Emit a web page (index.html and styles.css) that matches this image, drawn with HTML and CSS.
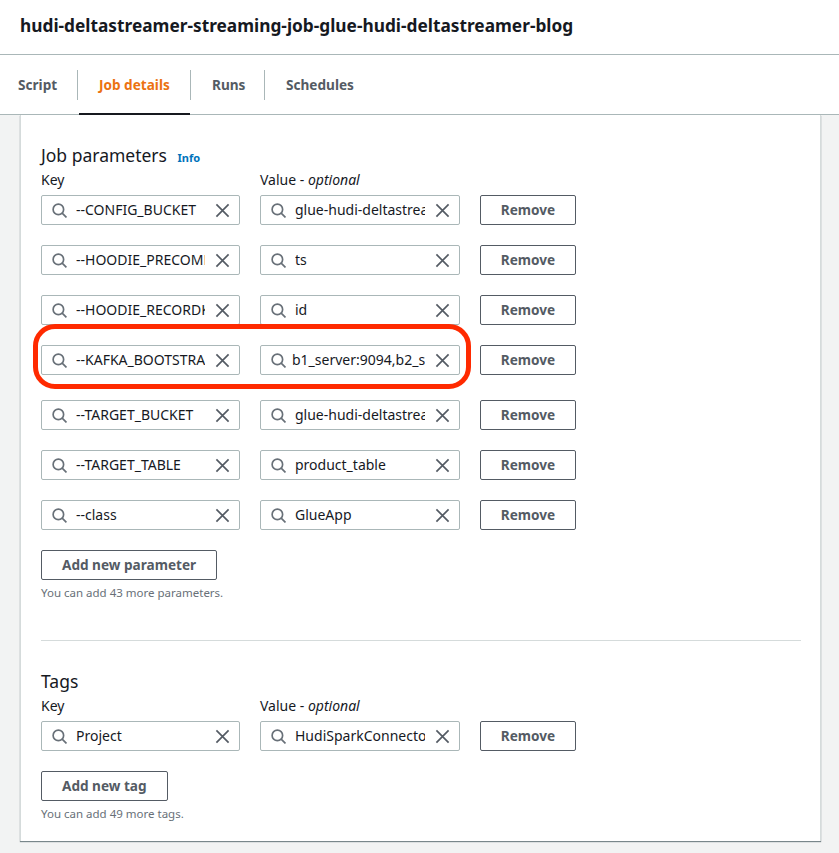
FILE: index.html
```html
<!DOCTYPE html>
<html lang="en">
<head>
  <meta charset="UTF-8" />
  <meta name="viewport" content="width=device-width, initial-scale=1.0" />
  <title>Job details</title>
  <link rel="stylesheet" href="styles.css">
</head>
<body>
  <svg class="icon-defs" aria-hidden="true">
    <symbol id="icon-search" viewBox="0 0 16 16">
      <circle cx="6.8" cy="6.8" r="5.6" />
      <path d="M10.8 10.8L15.4 15.4" />
    </symbol>
    <symbol id="icon-close" viewBox="0 0 16 16">
      <path d="M1.5 1.5L14.5 14.5M14.5 1.5L1.5 14.5" />
    </symbol>
  </svg>

  <header class="page-header">
    <h1>hudi-deltastreamer-streaming-job-glue-hudi-deltastreamer-blog</h1>
  </header>

  <nav class="tabs">
    <a class="tab tab-script">Script</a>
    <a class="tab tab-active">Job details</a>
    <a class="tab tab-runs">Runs</a>
    <a class="tab tab-schedules">Schedules</a>
  </nav>

  <main class="panel">
    <section class="group group-params">
      <h2>Job parameters <a class="info-link">Info</a></h2>
      <div class="labels">
        <span class="label">Key</span>
        <span class="label">Value - <em>optional</em></span>
      </div>

      <div class="row">
        <div class="field"><svg class="icon-search"><use href="#icon-search" /></svg><span class="field-text">--CONFIG_BUCKET</span><svg class="icon-close"><use href="#icon-close" /></svg></div>
        <div class="field"><svg class="icon-search"><use href="#icon-search" /></svg><span class="field-text">glue-hudi-deltastreamer-blog</span><svg class="icon-close"><use href="#icon-close" /></svg></div>
        <button class="btn btn-remove">Remove</button>
      </div>
      <div class="row">
        <div class="field"><svg class="icon-search"><use href="#icon-search" /></svg><span class="field-text">--HOODIE_PRECOMBINE</span><svg class="icon-close"><use href="#icon-close" /></svg></div>
        <div class="field"><svg class="icon-search"><use href="#icon-search" /></svg><span class="field-text">ts</span><svg class="icon-close"><use href="#icon-close" /></svg></div>
        <button class="btn btn-remove">Remove</button>
      </div>
      <div class="row">
        <div class="field"><svg class="icon-search"><use href="#icon-search" /></svg><span class="field-text">--HOODIE_RECORDKEY</span><svg class="icon-close"><use href="#icon-close" /></svg></div>
        <div class="field"><svg class="icon-search"><use href="#icon-search" /></svg><span class="field-text">id</span><svg class="icon-close"><use href="#icon-close" /></svg></div>
        <button class="btn btn-remove">Remove</button>
      </div>
      <div class="row row-marked">
        <div class="field"><svg class="icon-search"><use href="#icon-search" /></svg><span class="field-text">--KAFKA_BOOTSTRAP</span><svg class="icon-close"><use href="#icon-close" /></svg></div>
        <div class="field"><svg class="icon-search"><use href="#icon-search" /></svg><span class="field-text field-text-scrolled">b1_server:9094,b2_server:9094</span><svg class="icon-close"><use href="#icon-close" /></svg></div>
        <button class="btn btn-remove">Remove</button>
        <div class="highlight"></div>
      </div>
      <div class="row">
        <div class="field"><svg class="icon-search"><use href="#icon-search" /></svg><span class="field-text">--TARGET_BUCKET</span><svg class="icon-close"><use href="#icon-close" /></svg></div>
        <div class="field"><svg class="icon-search"><use href="#icon-search" /></svg><span class="field-text">glue-hudi-deltastreamer-blog</span><svg class="icon-close"><use href="#icon-close" /></svg></div>
        <button class="btn btn-remove">Remove</button>
      </div>
      <div class="row">
        <div class="field"><svg class="icon-search"><use href="#icon-search" /></svg><span class="field-text">--TARGET_TABLE</span><svg class="icon-close"><use href="#icon-close" /></svg></div>
        <div class="field"><svg class="icon-search"><use href="#icon-search" /></svg><span class="field-text">product_table</span><svg class="icon-close"><use href="#icon-close" /></svg></div>
        <button class="btn btn-remove">Remove</button>
      </div>
      <div class="row">
        <div class="field"><svg class="icon-search"><use href="#icon-search" /></svg><span class="field-text">--class</span><svg class="icon-close"><use href="#icon-close" /></svg></div>
        <div class="field"><svg class="icon-search"><use href="#icon-search" /></svg><span class="field-text">GlueApp</span><svg class="icon-close"><use href="#icon-close" /></svg></div>
        <button class="btn btn-remove">Remove</button>
      </div>

      <button class="btn btn-add">Add new parameter</button>
      <p class="hint">You can add 43 more parameters.</p>
    </section>

    <section class="group group-tags">
      <h2>Tags</h2>
      <div class="labels">
        <span class="label">Key</span>
        <span class="label">Value - <em>optional</em></span>
      </div>
      <div class="row">
        <div class="field"><svg class="icon-search"><use href="#icon-search" /></svg><span class="field-text">Project</span><svg class="icon-close"><use href="#icon-close" /></svg></div>
        <div class="field"><svg class="icon-search"><use href="#icon-search" /></svg><span class="field-text">HudiSparkConnector</span><svg class="icon-close"><use href="#icon-close" /></svg></div>
        <button class="btn btn-remove">Remove</button>
      </div>
      <button class="btn btn-add">Add new tag</button>
      <p class="hint">You can add 49 more tags.</p>
    </section>
  </main>
</body>
</html>
```

FILE: styles.css
```css
* {
  box-sizing: border-box;
}

html, body {
  height: 100%;
}

body {
  margin: 0;
  background: #f2f3f3;
  color: #16191f;
  font-family: "Noto Sans", "Open Sans", sans-serif;
  font-size: 14px;
  overflow: hidden;
}

.icon-defs {
  display: none;
}

.page-header {
  height: 55px;
  padding: 14px 20px 0;
  background: #fff;
  border-bottom: 1px solid #aab7b8;
}

h1 {
  margin: 0;
  font-size: 17.3px;
  line-height: 24px;
  font-weight: 700;
}

.tabs {
  display: flex;
  height: 60px;
  align-items: center;
  background: #fff;
  border-bottom: 1px solid #aab7b8;
}

.tab {
  position: relative;
  display: flex;
  align-items: center;
  height: 30px;
  font-weight: 700;
  font-size: 13.6px;
  color: #545b64;
}

.tab-script {
  width: 78px;
  padding-left: 18px;
  border-right: 1px solid #aab7b8;
}

.tab-active {
  width: 113px;
  padding-left: 21px;
  color: #ec7211;
  border-right: 1px solid #aab7b8;
}

/* underline sits on the tab bar's bottom edge */
.tab-active::after {
  content: "";
  position: absolute;
  left: 1px;
  right: 0;
  bottom: -15px;
  height: 2px;
  background: #16191f;
}

.tab-runs {
  width: 74px;
  padding-left: 21px;
  border-right: 1px solid #aab7b8;
}

.tab-schedules {
  padding-left: 21px;
}

.panel {
  width: 801px;
  height: 726px;
  margin-left: 20px;
  padding: 0 19px 0 20px;
  background: #fff;
  border-right: 1px solid #d5dbdb;
  border-left: 1px solid #d5dbdb;
  box-shadow: 0 1px 1px 0 rgba(0, 28, 36, 0.5);
}

.group-params {
  padding-top: 27px;
  height: 526px;
  border-bottom: 1px solid #d5dbdb;
}

.group-tags {
  padding-top: 27px;
}

h2 {
  margin: 0;
  font-size: 17.5px;
  line-height: 26px;
  font-weight: 400;
}

.info-link {
  margin-left: 6px;
  font-size: 11px;
  line-height: 1;
  font-weight: 700;
  color: #0073bb;
}

.labels {
  display: flex;
  gap: 20px;
  height: 27px;
  align-items: flex-start;
}

.label {
  width: 199px;
  font-size: 14px;
  line-height: 24px;
}

.row {
  position: relative;
  display: flex;
  gap: 20px;
  margin-bottom: 20px;
}

.row-marked {
  margin-bottom: 25px;
}

.field {
  display: flex;
  align-items: center;
  flex: none;
  width: 199px;
  height: 30px;
  padding: 0 9px 0 10px;
  border: 1px solid #aab7b8;
  border-radius: 2px;
  background: #fff;
}

.field + .field {
  width: 200px;
}

.field-text {
  flex: 1;
  min-width: 0;
  margin: 0 10px 0 9px;
  padding-bottom: 2px;
  overflow: hidden;
  white-space: nowrap;
  color: #16191f;
  font-size: 14px;
}

/* this value was scrolled a little inside its input */
.field-text-scrolled {
  margin-left: 6px;
}

.icon-search,
.icon-close {
  flex: none;
  width: 15px;
  height: 15px;
  fill: none;
  stroke-width: 1.8;
}

.icon-search {
  stroke: #687078;
}

.icon-close {
  stroke: #545b64;
}

.btn {
  display: block;
  height: 30px;
  padding: 0 20px 2px;
  background: #fff;
  border: 1px solid #545b64;
  border-radius: 2px;
  color: #545b64;
  font-family: inherit;
  font-size: 13.6px;
  font-weight: 700;
}

.btn-remove {
  width: 96px;
  padding: 0 0 2px;
}

.hint {
  margin: 5px 0 0;
  font-size: 11.5px;
  line-height: 16px;
  color: #687078;
}

/* red annotation drawn over the marked row */
.highlight {
  position: absolute;
  left: -8px;
  top: -21px;
  width: 438px;
  height: 65px;
  border: 5px solid #ff2a00;
  border-radius: 22px;
  pointer-events: none;
}
```
